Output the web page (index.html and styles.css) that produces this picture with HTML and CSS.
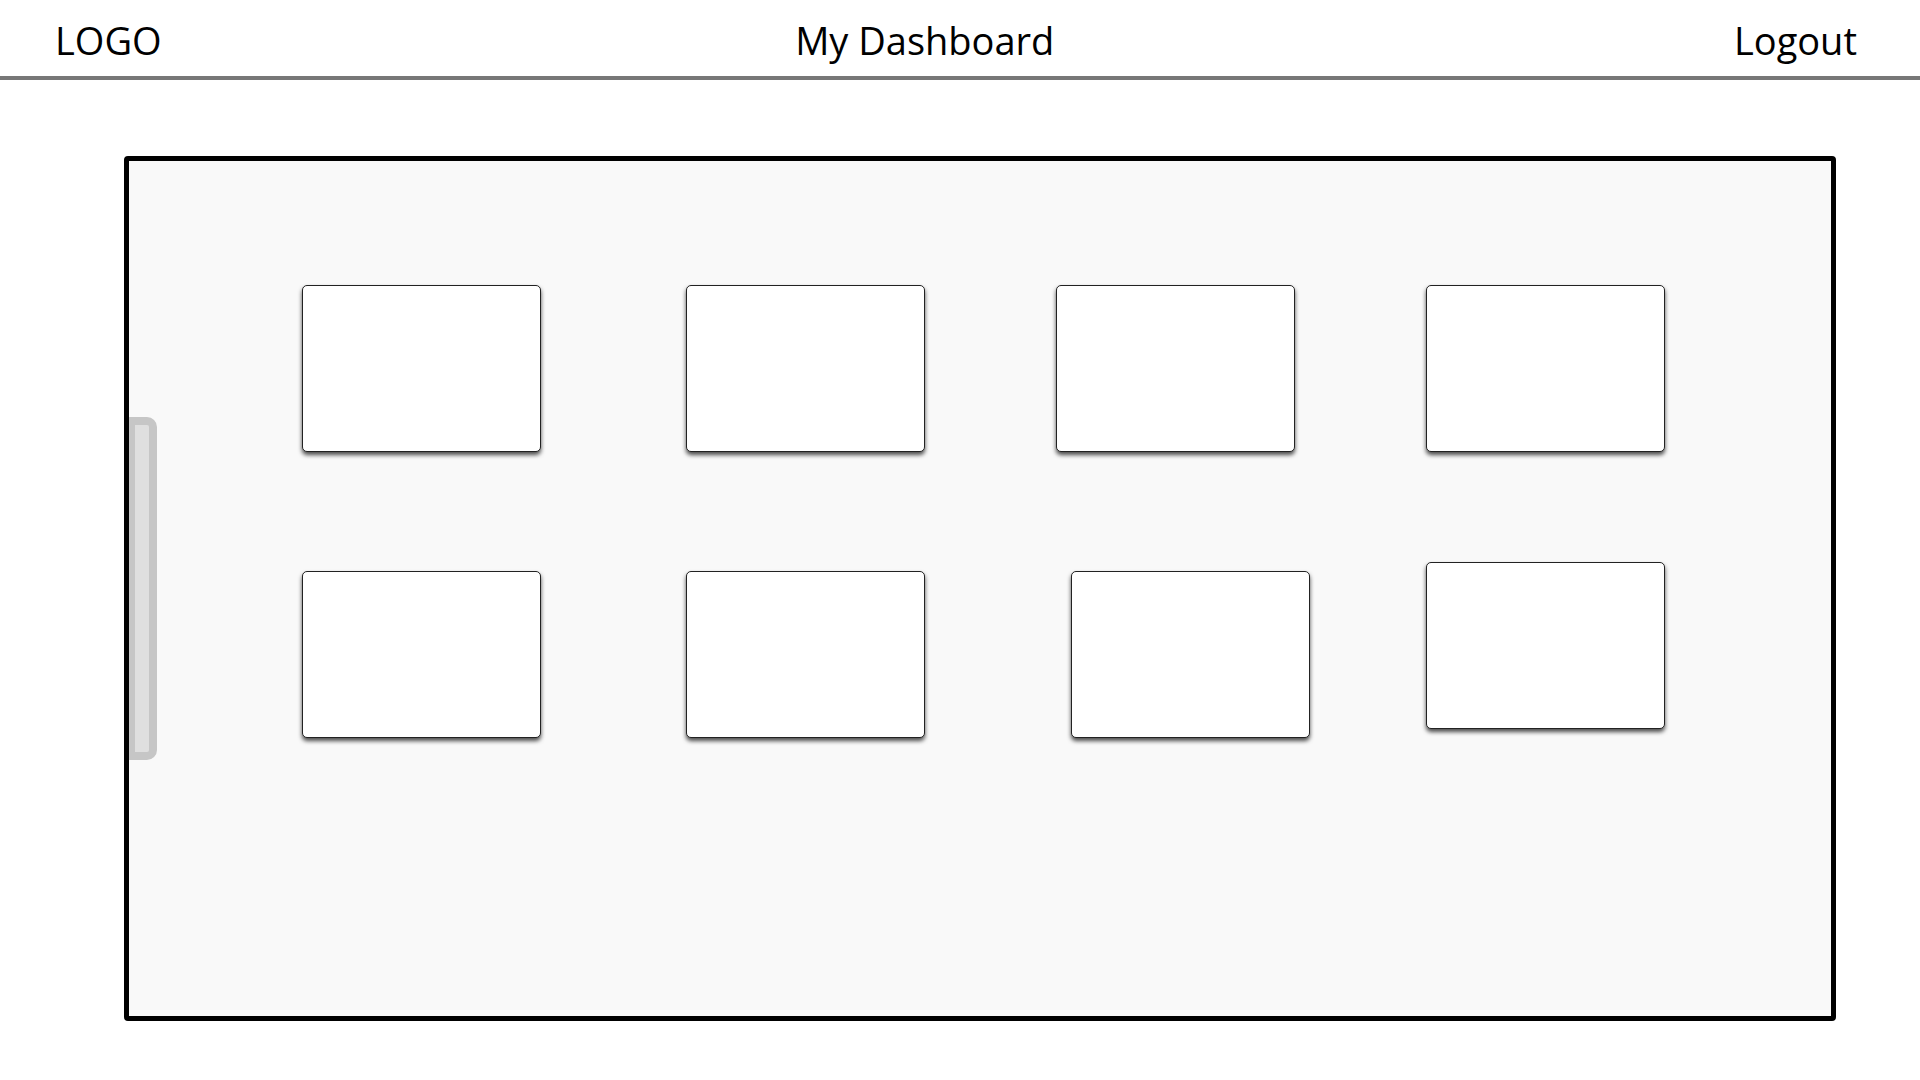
FILE: index.html
```html
<!DOCTYPE html>
<html lang="en">
<head>
    <meta charset="UTF-8">
    <meta name="viewport" content="width=device-width, initial-scale=1.0">
    <title>My Dashboard</title>
    <link rel="stylesheet" href="styles.css">
</head>
<body>
    <header class="topbar">
        <div class="logo">LOGO</div>
        <div class="title">My Dashboard</div>
        <a class="logout" href="#">Logout</a>
    </header>

    <main class="board">
        <div class="drawer-tab"></div>
        <div class="tiles">
            <div class="tile"></div>
            <div class="tile"></div>
            <div class="tile"></div>
            <div class="tile"></div>
            <div class="tile"></div>
            <div class="tile"></div>
            <div class="tile tile-nudge-right"></div>
            <div class="tile tile-nudge-up"></div>
        </div>
    </main>
</body>
</html>
```

FILE: styles.css
```css
body {
    margin: 0;
    font-family: "Open Sans", "Noto Sans", Arial, sans-serif;
    color: #000;
    background-color: #fff;
}
.topbar {
    display: flex;
    justify-content: space-between;
    align-items: flex-start;
    height: 80px;
    box-sizing: border-box;
    padding: 20px 63px 0 55px;
    border-bottom: 4px solid #777;
    font-size: 38px;
    line-height: 40px;
}
.title {
    margin-right: 46px;
}
.logout {
    color: #000;
    text-decoration: none;
}
.board {
    position: relative;
    box-sizing: border-box;
    width: 1712px;
    height: 865px;
    margin: 76px 0 0 124px;
    padding: 124px 0 0 173px;
    border: 5px solid #000;
    border-radius: 4px;
    background-color: #f9f9f9;
}
.drawer-tab {
    position: absolute;
    left: 0;
    top: 256px;
    width: 28px;
    height: 343px;
    box-sizing: border-box;
    border: 8px solid #c6c6c6;
    border-left-width: 6px;
    border-radius: 0 10px 10px 0;
    background-color: #dfdfdf;
}
.tiles {
    display: grid;
    grid-template-columns: 384px 370px 370px 239px;
    grid-auto-rows: 167px;
    row-gap: 119px;
}
.tile {
    width: 239px;
    height: 167px;
    box-sizing: border-box;
    border: 1px solid #222;
    border-radius: 5px;
    background-color: #fff;
    box-shadow: 0 3px 4px rgba(0, 0, 0, 0.7);
}
.tile-nudge-right {
    margin-left: 15px;
}
.tile-nudge-up {
    margin-top: -9px;
}
```
